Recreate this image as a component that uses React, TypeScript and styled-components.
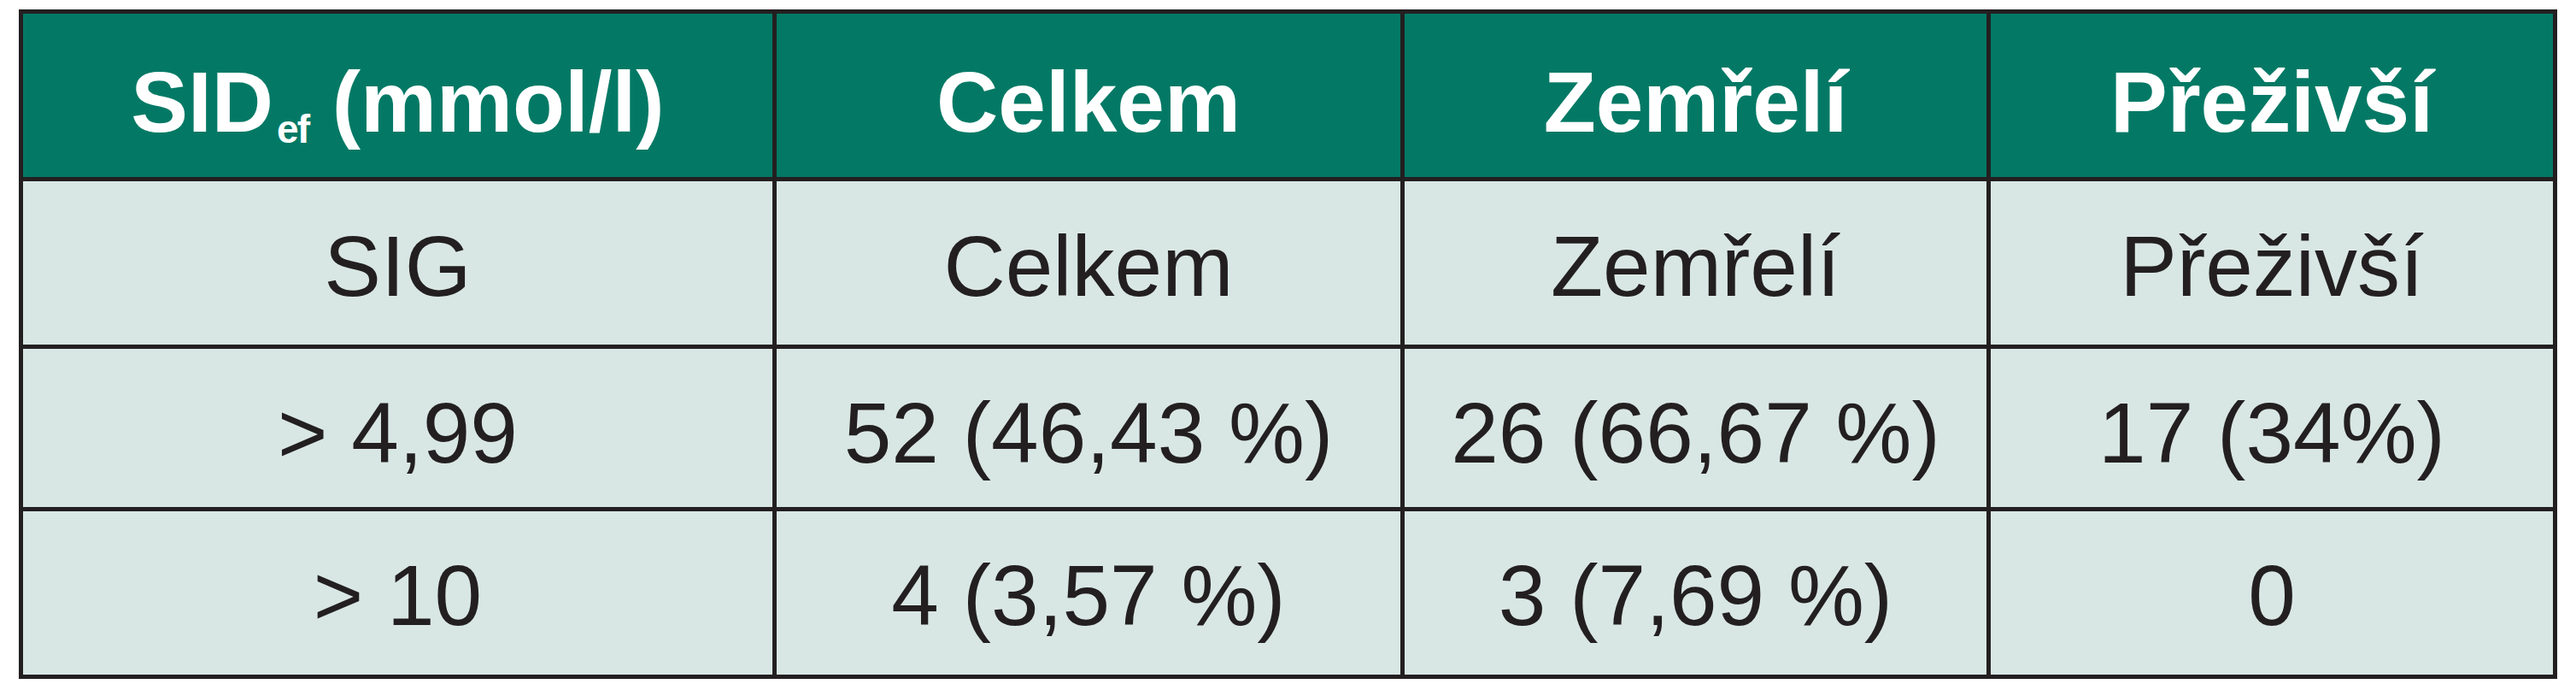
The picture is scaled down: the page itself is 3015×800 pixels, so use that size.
import React from 'react';
import styled, { createGlobalStyle } from 'styled-components';

const GlobalStyle = createGlobalStyle`
  html, body {
    margin: 0;
    padding: 0;
    background: #ffffff;
  }
  body {
    font-family: "Liberation Sans", Arial, sans-serif;
  }
`;

const Page = styled.div`
  padding: 11px 0 0 22px;
`;

const Table = styled.div`
  display: grid;
  grid-template-columns: 877px 730px 681px 658px;
  grid-template-rows: 191px 191px 185px 191px;
  gap: 5px;
  padding: 5px;
  width: max-content;
  background: #231f20;
`;

const HeadCell = styled.div`
  display: flex;
  align-items: center;
  justify-content: center;
  padding-top: 14px;
  box-sizing: border-box;
  background: #037965;
  color: #ffffff;
  font-weight: 700;
  font-size: 100px;
  line-height: 1;
  white-space: nowrap;
`;

const Cell = styled.div<{ $shift?: number }>`
  display: flex;
  align-items: center;
  justify-content: center;
  padding-top: ${(p) => p.$shift ?? 8}px;
  box-sizing: border-box;
  background: #d9e7e4;
  color: #231f20;
  font-weight: 400;
  font-size: 100px;
  line-height: 1;
  white-space: nowrap;
`;

const Sub = styled.span`
  position: relative;
  top: 32px;
  margin-left: 4px;
  font-size: 46px;
  letter-spacing: -2px;
  line-height: 0;
`;

const rows: { cells: string[]; shift: number }[] = [
  { cells: ['SIG', 'Celkem', 'Zemřelí', 'Přeživší'], shift: 6 },
  { cells: ['> 4,99', '52 (46,43 %)', '26 (66,67 %)', '17 (34%)'], shift: 11 },
  { cells: ['> 10', '4 (3,57 %)', '3 (7,69 %)', '0'], shift: 5 },
];

export default function App() {
  return (
    <>
      <GlobalStyle />
      <Page>
        <Table>
          <HeadCell>
            SID<Sub>ef</Sub>&nbsp;(mmol/l)
          </HeadCell>
          <HeadCell>Celkem</HeadCell>
          <HeadCell>Zemřelí</HeadCell>
          <HeadCell>Přeživší</HeadCell>
          {rows.map((row, i) =>
            row.cells.map((text, j) => (
              <Cell key={`${i}-${j}`} $shift={row.shift}>
                {text}
              </Cell>
            ))
          )}
        </Table>
      </Page>
    </>
  );
}
